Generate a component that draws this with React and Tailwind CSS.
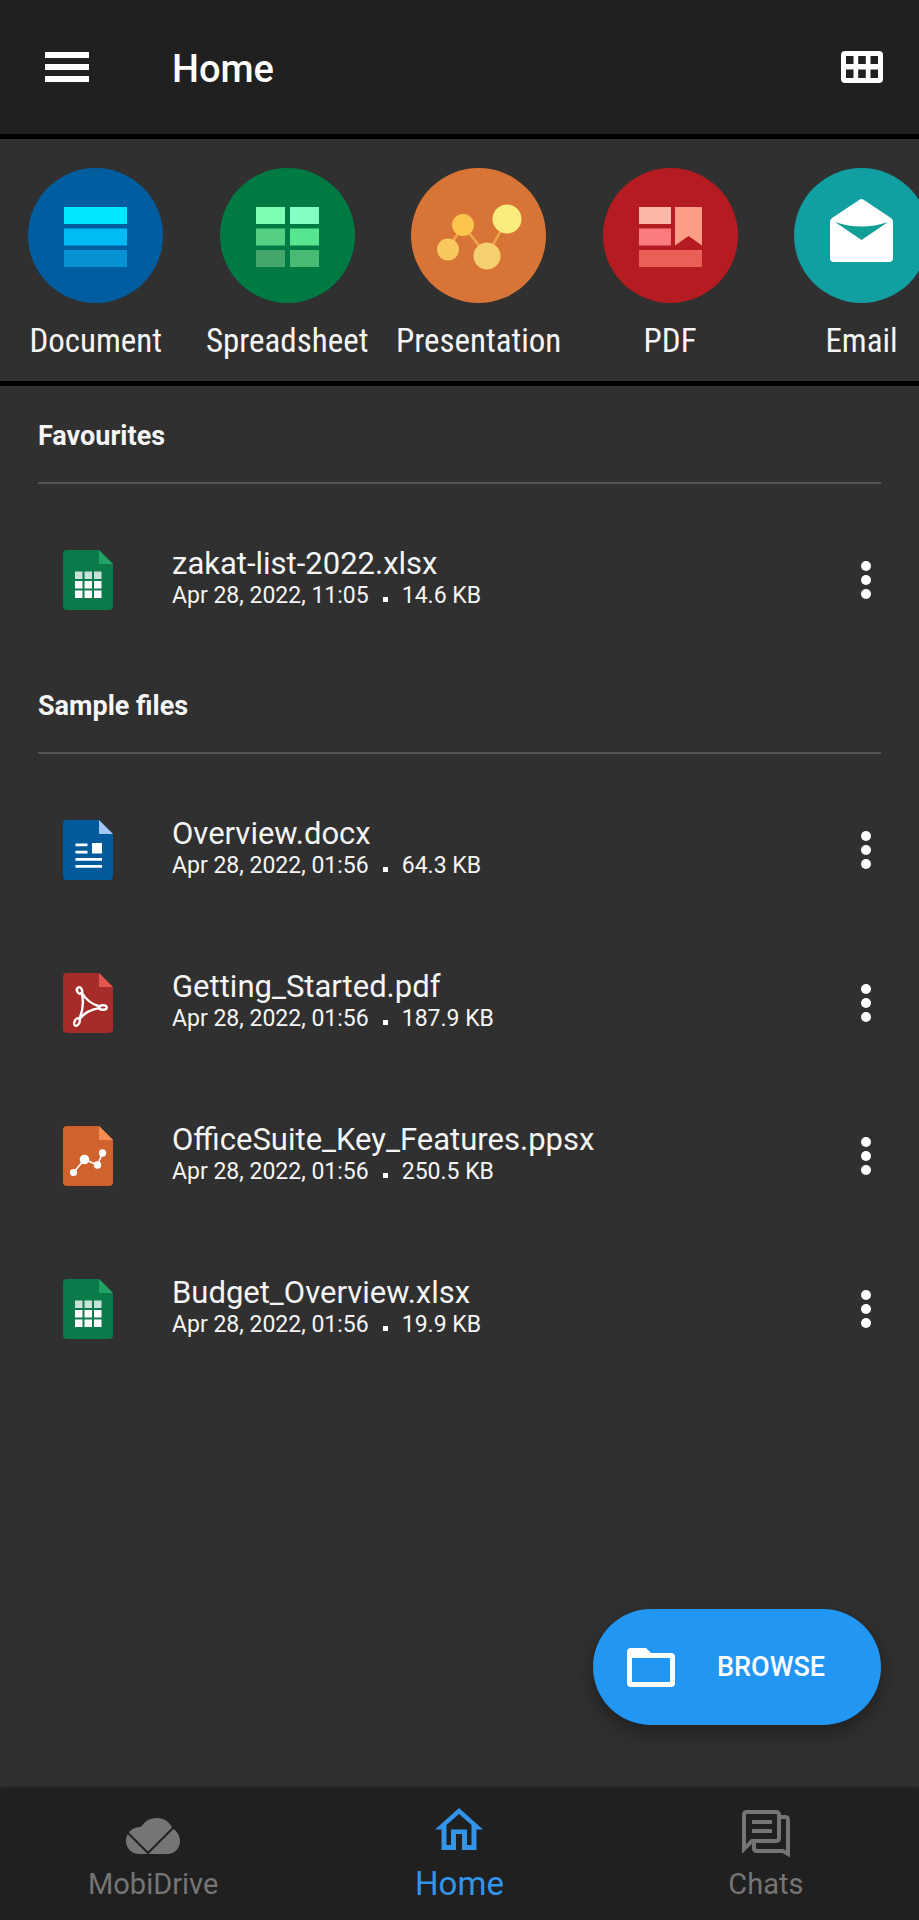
const categories = [
  { name: 'Document', color: '#005da0', Icon: DocumentGlyph },
  { name: 'Spreadsheet', color: '#007a43', Icon: SpreadsheetGlyph },
  { name: 'Presentation', color: '#d87536', Icon: PresentationGlyph },
  { name: 'PDF', color: '#b41c21', Icon: PdfGlyph },
  { name: 'Email', color: '#129fa2', Icon: EmailGlyph },
]

const favourites = [
  { name: 'zakat-list-2022.xlsx', date: 'Apr 28, 2022, 11:05', size: '14.6 KB', type: 'xlsx' },
]

const samples = [
  { name: 'Overview.docx', date: 'Apr 28, 2022, 01:56', size: '64.3 KB', type: 'docx' },
  { name: 'Getting_Started.pdf', date: 'Apr 28, 2022, 01:56', size: '187.9 KB', type: 'pdf' },
  { name: 'OfficeSuite_Key_Features.ppsx', date: 'Apr 28, 2022, 01:56', size: '250.5 KB', type: 'ppsx' },
  { name: 'Budget_Overview.xlsx', date: 'Apr 28, 2022, 01:56', size: '19.9 KB', type: 'xlsx' },
]

function DocumentGlyph() {
  return (
    <>
      <rect x="36" y="39" width="63" height="17" fill="#00e8ff" />
      <rect x="36" y="60.5" width="63" height="17" fill="#00bcf2" />
      <rect x="36" y="82" width="63" height="17" fill="#0892d6" />
    </>
  )
}

function SpreadsheetGlyph() {
  return (
    <>
      <rect x="36" y="39" width="29" height="17" fill="#7bfdb4" />
      <rect x="70" y="39" width="29" height="17" fill="#83ffc6" />
      <rect x="36" y="60.5" width="29" height="17" fill="#54cf84" />
      <rect x="70" y="60.5" width="29" height="17" fill="#58e58f" />
      <rect x="36" y="82" width="29" height="17" fill="#45a66b" />
      <rect x="70" y="82" width="29" height="17" fill="#48ba73" />
    </>
  )
}

function PresentationGlyph() {
  return (
    <>
      <path d="M37 81.5 52 57l24 31 20-37" fill="none" stroke="#f0a54f" strokeWidth="2.5" />
      <circle cx="37" cy="81.5" r="11" fill="#f8c95e" />
      <circle cx="52" cy="57" r="11" fill="#fdc54e" />
      <circle cx="76" cy="88" r="13.5" fill="#f5d070" />
      <circle cx="96" cy="51" r="14.5" fill="#f9ec7c" />
    </>
  )
}

function PdfGlyph() {
  return (
    <>
      <rect x="36" y="39" width="32" height="17" fill="#ffb7a6" />
      <rect x="36" y="60.5" width="32" height="17" fill="#fa7c7e" />
      <path d="M72 39h27v38.5L85.5 68 72 77.5z" fill="#fd9c87" />
      <rect x="36" y="82" width="63" height="17" fill="#ea5f57" />
    </>
  )
}

function EmailGlyph() {
  return (
    <>
      <path d="M67.5 31q1 0 2 .8L97 50q2 1.5 2 4v36q0 4-4 4H40q-4 0-4-4V54q0-2.5 2-4l27.500-18.200q1-.8 2-.8z" fill="#fff" />
      <path d="M41 54q26.500 9 53 0L67.500 72z" fill="#129f96" />
    </>
  )
}

function XlsxGlyph() {
  return (
    <>
      {[12, 21.5, 31].map((x) => (
        <g key={x} fill="#fff">
          <rect x={x} y="21.5" width="7.5" height="7.5" opacity="0.78" />
          <rect x={x} y="31" width="7.5" height="7.5" />
          <rect x={x} y="40.5" width="7.5" height="7.5" />
        </g>
      ))}
    </>
  )
}

function DocxGlyph() {
  return <path d="M12.5 23.5h12v2.7h-12zM12.5 30.7h12v2.7h-12zM29 23h10v10.4H29zM12.5 38H39v2.7H12.5zM12.5 45H39v2.7H12.5z" fill="#fff" />
}

function AcrobatGlyph() {
  return (
    <g fill="none" stroke="#fff" strokeWidth="2.4" strokeLinecap="round">
      <ellipse cx="16.5" cy="17.5" rx="2.5" ry="3.200" transform="rotate(-25 16.500 17.500)" />
      <ellipse cx="14" cy="49" rx="2.500" ry="4" transform="rotate(25 14 49)" />
      <ellipse cx="40" cy="34.500" rx="3.800" ry="2.300" />
      <path d="M18.500 20C21 28 20 37 16.500 46" />
      <path d="M19 20c3.500 6 9 11 17.500 13.500" />
      <path d="M16.500 46.500C20 41 28 36.500 36.500 35" />
    </g>
  )
}

function PpsxGlyph() {
  return (
    <g fill="#fff">
      <path d="M10.5 46.5l11-13 13 5.5 5-12" fill="none" stroke="#fff" strokeWidth="1.6" />
      <circle cx="10.5" cy="46.5" r="3.6" />
      <circle cx="21.5" cy="33.5" r="4.8" />
      <circle cx="34.5" cy="39" r="3.7" />
      <circle cx="39.5" cy="27" r="3.7" />
    </g>
  )
}

const fileTypes = {
  xlsx: { color: '#0b7a4b', fold: '#21a366', Glyph: XlsxGlyph },
  docx: { color: '#015a9c', fold: '#a3c6f5', Glyph: DocxGlyph },
  pdf: { color: '#a52c28', fold: '#e2564f', Glyph: AcrobatGlyph },
  ppsx: { color: '#d0622d', fold: '#f58d51', Glyph: PpsxGlyph },
}

function FileIcon({ type }) {
  const { color, fold, Glyph } = fileTypes[type]
  return (
    <svg viewBox="0 0 50 60" className="w-[50px] h-[60px] shrink-0" aria-hidden="true">
      <path d="M4 0h32l14 14v42q0 4-4 4H4q-4 0-4-4V4q0-4 4-4z" fill={color} />
      <path d="M36 0l14 14H36z" fill={fold} />
      <Glyph />
    </svg>
  )
}

function FileRow({ file }) {
  return (
    <li className="flex items-center h-[153px] pl-[25px]">
      <FileIcon type={file.type} />
      <div className="flex-1 min-w-0 ml-[59px]">
        <p className="text-[31px] leading-8 break-words">{file.name}</p>
        <p className="flex items-center text-[23px] leading-8">
          <span>{file.date}</span>
          <span className="w-[5px] h-[5px] bg-white mx-[14px] mt-2" />
          <span>{file.size}</span>
        </p>
      </div>
      <button type="button" aria-label={'More options for ' + file.name} className="flex flex-col items-center gap-1 w-[30px] py-4">
        <span className="w-[10px] h-[10px] rounded-full bg-white" />
        <span className="w-[10px] h-[10px] rounded-full bg-white" />
        <span className="w-[10px] h-[10px] rounded-full bg-white" />
      </button>
    </li>
  )
}

function Section({ title, files }) {
  return (
    <section className="px-[38px]">
      <h2 className="h-[98px] pt-8 border-b-2 border-[#545454] text-[27px] leading-9 font-bold">{title}</h2>
      <ul className="pt-[19px]">
        {files.map((f) => (
          <FileRow key={f.name} file={f} />
        ))}
      </ul>
    </section>
  )
}

export default function App() {
  return (
    <div className="min-h-screen flex flex-col bg-[#303030] text-[#f5f5f5] font-['Roboto',sans-serif]">
      {/* Top bar */}
      <header className="flex items-center h-[139px] pl-[45px] pr-9 bg-[#202020] border-b-5 border-black">
        <button type="button" aria-label="Menu" className="flex flex-col gap-[6px] w-11">
          <span className="h-[6px] bg-white" />
          <span className="h-[6px] bg-white" />
          <span className="h-[6px] bg-white" />
        </button>
        <h1 className="flex-1 ml-[83px] pt-1 text-[38px] leading-[44px] font-medium text-white">Home</h1>
        <button type="button" aria-label="Grid view">
          <svg viewBox="0 0 42 32" className="w-[42px] h-8">
            <path
              fillRule="evenodd"
              fill="#fff"
              d="M4 0h34q4 0 4 4v24q0 4-4 4H4q-4 0-4-4V4q0-4 4-4zM5 5v8h7.500V5zM17.200 5v8h7.600V5zM29.500 5v8H37V5zM5 18.500v8.500h7.500v-8.500zM17.200 18.500v8.500h7.600v-8.500zM29.500 18.500v8.500H37v-8.500z"
            />
          </svg>
        </button>
      </header>

      {/* Categories */}
      <nav aria-label="File types" className="flex h-[247px] pt-[29px] border-b-5 border-black overflow-x-auto [scrollbar-width:none]">
        {categories.map(({ name, color, Icon }) => (
          <a key={name} href={'#' + name.toLowerCase()} className="flex flex-col items-center shrink-0 w-5/24">
            <svg viewBox="0 0 135 135" className="w-[135px] h-[135px]" aria-hidden="true">
              <circle cx="67.5" cy="67.5" r="67.5" fill={color} />
              <Icon />
            </svg>
            <span className="mt-[18px] text-[33px] leading-10 font-['Roboto_Condensed','Roboto',sans-serif]">{name}</span>
          </a>
        ))}
      </nav>

      <main className="flex-1 flex flex-col">
        <Section title="Favourites" files={favourites} />
        <Section title="Sample files" files={samples} />

        <div className="mt-auto flex justify-end px-[38px] pb-[63px]">
          <button type="button" className="flex items-center w-[288px] h-[116px] pl-[34px] rounded-full bg-[#2196f3] text-white shadow-[0_8px_20px_rgba(0,0,0,0.35)]">
            <svg viewBox="0 0 48 39" className="w-12 h-[39px]" aria-hidden="true">
              <path
                fillRule="evenodd"
                fill="#fff"
                d="M4 0h15l5 5h20q4 0 4 4v26q0 4-4 4H4q-4 0-4-4V4q0-4 4-4zM5 10v24h38V10z"
              />
            </svg>
            <span className="ml-[42px] text-[27px] leading-8 font-medium">BROWSE</span>
          </button>
        </div>
      </main>

      {/* Bottom tabs */}
      <nav aria-label="Main" className="grid grid-cols-3 h-[132px] bg-[#202020] text-[#757575] text-[29px] leading-9 shadow-[0_-1px_3px_rgba(0,0,0,0.3)]">
        <a href="#mobidrive" className="flex flex-col items-center justify-end pb-[18px]">
          <svg viewBox="0 0 54 36" className="w-[54px] h-9 mb-3" aria-hidden="true">
            <path d="M13 36A13 13 0 0 1 0 23C0 15 6 9 15 9 19 3 24 0 31 0c7 0 13 4 15 10 5 3 8 8 8 13 0 7-5 13-13 13z" fill="#757575" />
            <path d="M1 14l21 21L48 9" fill="none" stroke="#202020" strokeWidth="2" />
          </svg>
          MobiDrive
        </a>
        <a href="#home" aria-current="page" className="flex flex-col items-center justify-end pb-[18px] text-[33px] text-[#3394e8]">
          <svg viewBox="0 0 48 42" className="w-12 h-[42px] mb-4" aria-hidden="true">
            <path d="M0 21.5 24 0l24 21.5h-6.5V42H27V26h-6v16H6.5V21.5z" fill="#3394e8" />
            <path d="M11.5 17 24 6l12.5 11v20H32V21.500H16V37h-4.500z" fill="#202020" />
          </svg>
          Home
        </a>
        <a href="#chats" className="flex flex-col items-center justify-end pb-[18px]">
          <svg viewBox="0 0 48 48" className="w-12 h-12 mb-2" fill="none" stroke="#757575" strokeWidth="4" aria-hidden="true">
            <path d="M2 39V5q0-3 3-3h29q3 0 3 3v23q0 3-3 3H10z" />
            <path d="M37 7h6q3 0 3 3v34l-5-3H15q-3 0-3-3v-6" />
            <path d="M10 12h20M10 21h20" />
          </svg>
          Chats
        </a>
      </nav>
    </div>
  )
}
